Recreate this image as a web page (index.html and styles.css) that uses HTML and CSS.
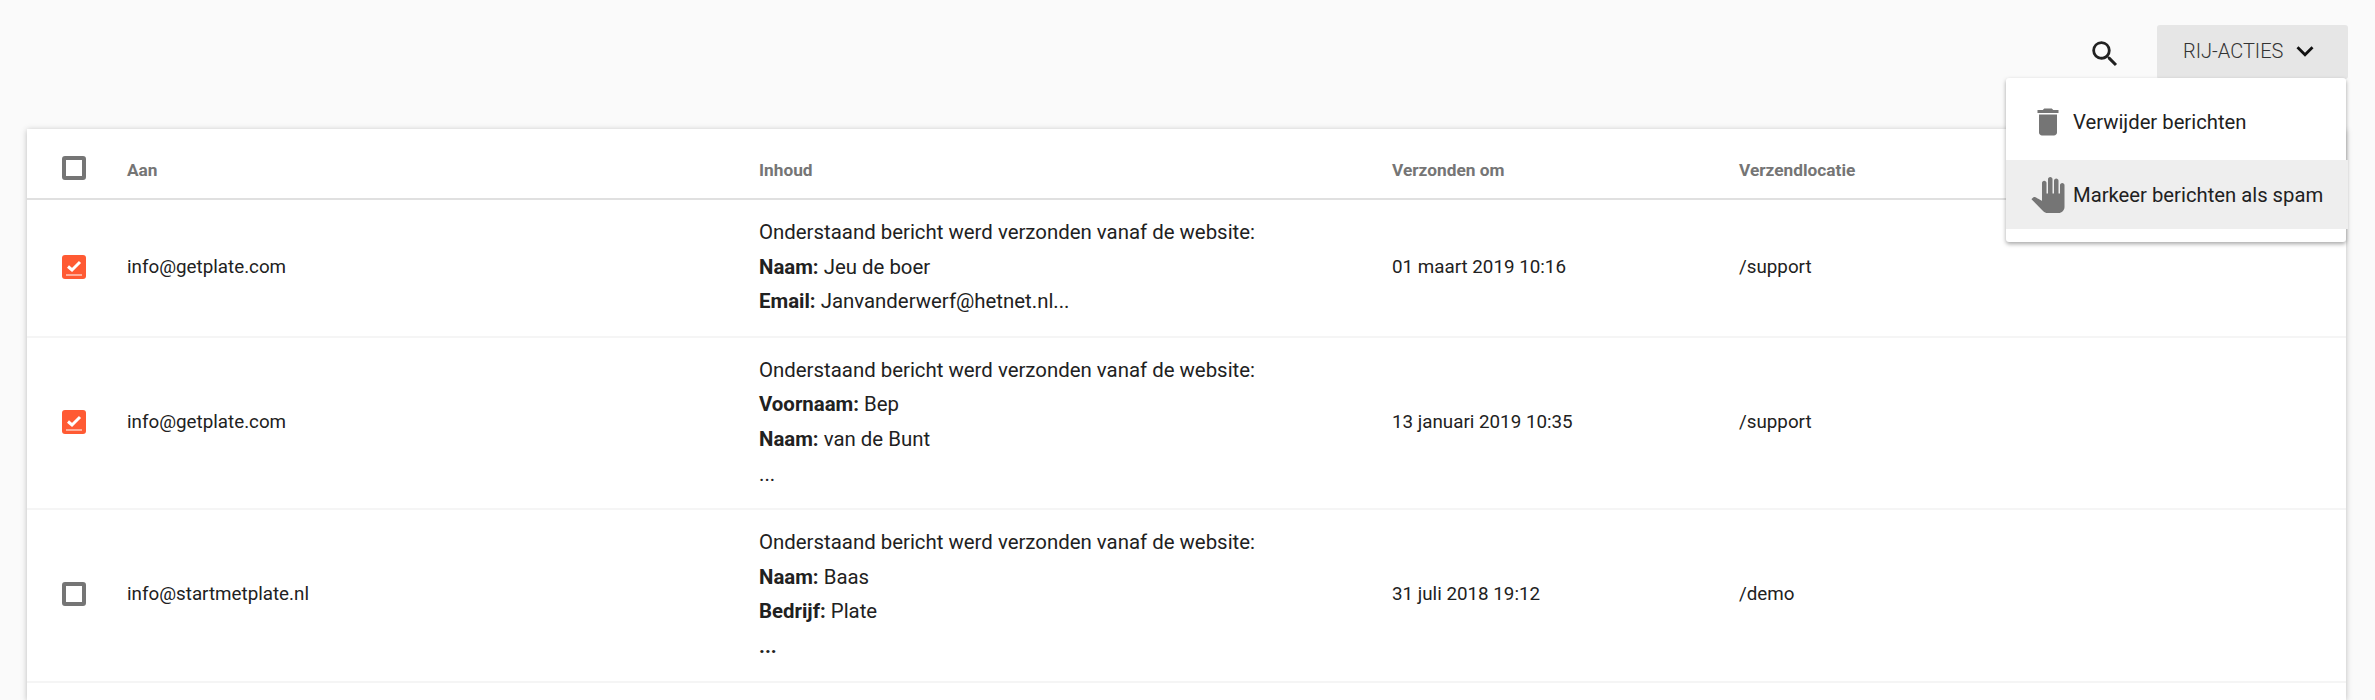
FILE: index.html
```html
<!DOCTYPE html>
<html lang="nl">
<head>
<meta charset="utf-8">
<title>Berichten</title>
<link rel="stylesheet" href="styles.css">
</head>
<body>
<div class="toolbar">
  <button class="icon-btn" aria-label="Zoeken">
    <svg class="search-icon" viewBox="0 0 24 24"><path d="M15.5 14h-.79l-.28-.27A6.47 6.47 0 0 0 16 9.5 6.5 6.5 0 1 0 9.5 16c1.61 0 3.09-.59 4.23-1.57l.27.28v.79l5 4.99L20.49 19l-4.99-5zm-6 0C7.01 14 5 11.99 5 9.5S7.01 5 9.5 5 14 7.01 14 9.5 11.99 14 9.5 14z"/></svg>
  </button>
  <div class="actions">
    <button class="actions-btn">RIJ-ACTIES
      <svg class="chevron" viewBox="0 0 24 24"><path d="M7.41 8.59 12 13.17l4.59-4.58L18 10l-6 6-6-6z"/></svg>
    </button>
    <div class="menu">
      <div class="menu-item">
        <svg class="menu-icon" viewBox="0 0 24 24"><path d="M6 19c0 1.1.9 2 2 2h8c1.1 0 2-.9 2-2V7H6v12zM19 4h-3.5l-1-1h-5l-1 1H5v2h14V4z"/></svg>
        <span>Verwijder berichten</span>
      </div>
      <div class="menu-item active">
        <svg class="menu-icon" viewBox="0 0 24 24"><path d="M23 5.5V20c0 2.2-1.8 4-4 4h-7.3c-1.08 0-2.1-.43-2.85-1.19L1 14.83s1.26-1.23 1.3-1.25c.22-.19.49-.29.79-.29.22 0 .42.06.6.16.04.01 4.31 2.46 4.31 2.46V4c0-.83.67-1.5 1.5-1.5S11 3.17 11 4v7h1V1.5c0-.83.67-1.5 1.5-1.5S15 .67 15 1.5V11h1V2.5c0-.83.67-1.5 1.5-1.5s1.5.67 1.5 1.5V11h1V5.5c0-.83.67-1.5 1.5-1.5s1.5.67 1.5 1.5z"/></svg>
        <span>Markeer berichten als spam</span>
      </div>
    </div>
  </div>
</div>

<main class="card">
  <table class="grid">
    <colgroup>
      <col class="c-check"><col class="c-to"><col class="c-body"><col class="c-date"><col class="c-loc">
    </colgroup>
    <thead>
      <tr>
        <th><span class="box"></span></th>
        <th>Aan</th>
        <th>Inhoud</th>
        <th>Verzonden om</th>
        <th>Verzendlocatie</th>
      </tr>
    </thead>
    <tbody>
      <tr>
        <td><span class="box checked"><svg viewBox="0 0 24 24"><path class="tick" d="M6 11.5l4 3.5 8-8"/><path class="line" d="M4 20h16"/></svg></span></td>
        <td>info@getplate.com</td>
        <td class="message">
          <p>Onderstaand bericht werd verzonden vanaf de website:</p>
          <p><b>Naam:</b> Jeu de boer</p>
          <p><b>Email:</b> Janvanderwerf@hetnet.nl...</p>
        </td>
        <td>01 maart 2019 10:16</td>
        <td>/support</td>
      </tr>
      <tr>
        <td><span class="box checked"><svg viewBox="0 0 24 24"><path class="tick" d="M6 11.5l4 3.5 8-8"/><path class="line" d="M4 20h16"/></svg></span></td>
        <td>info@getplate.com</td>
        <td class="message">
          <p>Onderstaand bericht werd verzonden vanaf de website:</p>
          <p><b>Voornaam:</b> Bep</p>
          <p><b>Naam:</b> van de Bunt</p>
          <p>...</p>
        </td>
        <td>13 januari 2019 10:35</td>
        <td>/support</td>
      </tr>
      <tr>
        <td><span class="box"></span></td>
        <td>info@startmetplate.nl</td>
        <td class="message">
          <p>Onderstaand bericht werd verzonden vanaf de website:</p>
          <p><b>Naam:</b> Baas</p>
          <p><b>Bedrijf:</b> Plate</p>
          <p><b>...</b></p>
        </td>
        <td>31 juli 2018 19:12</td>
        <td>/demo</td>
      </tr>
    </tbody>
  </table>
</main>
</body>
</html>
```
FILE: styles.css
```css
html, body {
  margin: 0;
  height: 700px;
  overflow: hidden;
  background: #fafafa;
  color: #212121;
  font-family: Roboto, "Liberation Sans", sans-serif;
}
.toolbar {
  display: flex;
  justify-content: flex-end;
  align-items: flex-start;
  height: 54px;
  padding: 25px 27px 0 0;
  gap: 28px;
}
.icon-btn {
  border: 0;
  background: none;
  padding: 0;
  margin-top: 5px;
  width: 48px;
  height: 48px;
  display: flex;
  align-items: center;
  justify-content: center;
}
.search-icon { width: 34px; height: 34px; fill: #212121; }
.actions { position: relative; }
.actions-btn {
  display: flex;
  align-items: center;
  gap: 5px;
  width: 191px;
  height: 54px;
  padding: 0 0 2px 26px;
  border: 0;
  border-radius: 3px;
  background: #e6e6e6;
  color: #333;
  font: 300 20px Roboto, sans-serif;
}
.chevron { width: 34px; height: 34px; fill: #111; flex: none; }
.menu {
  position: absolute;
  top: 53px;
  right: 2px;
  width: 340px;
  height: 164px;
  padding-top: 9px;
  box-sizing: border-box;
  background: #fff;
  border-radius: 3px;
  box-shadow: 0 2px 4px rgba(0,0,0,.35);
  z-index: 2;
}
.menu-item {
  display: flex;
  align-items: center;
  height: 69px;
  padding-left: 24px;
  font-size: 20.25px;
  color: #212121;
}
.menu-item + .menu-item { margin-top: 4px; }
.menu-item.active { background: #eee; width: 318px; }
.menu-icon { width: 36px; height: 36px; fill: #757575; margin-right: 7px; flex: none; }

.card {
  margin: 50px 29px 0 27px;
  min-height: 571px;
  background: #fff;
  box-shadow: 0 1px 6px rgba(0,0,0,.25);
}
.grid { width: 100%; border-collapse: collapse; table-layout: fixed; }
.c-check { width: 100px; }
.c-to { width: 632px; }
.c-body { width: 633px; }
.c-date { width: 347px; }
th {
  height: 57px;
  padding: 12px 0 0;
  text-align: left;
  font-size: 17.3px;
  font-weight: 700;
  color: #757575;
  border-bottom: 2px solid #e0e0e0;
}
td {
  padding: 15px 0 17px;
  font-size: 18.8px;
  line-height: 34.6px;
  color: #212121;
  border-bottom: 2px solid #f5f5f5;
}
td.message { font-size: 20.4px; }
td p { margin: 0; }
td b { font-weight: 700; }
th:first-child, td:first-child { padding-left: 35px; }
th:first-child { padding-top: 8px; }
.box {
  display: block;
  box-sizing: border-box;
  width: 24px;
  height: 24px;
  border: 4px solid #757575;
  border-radius: 3px;
}
.box.checked {
  background: #ff5a33;
  border: 0;
}
.box svg { display: block; width: 24px; height: 24px; fill: none; stroke: #fff; }
.tick { stroke-width: 3; }
.line { stroke-width: 1; }
```
